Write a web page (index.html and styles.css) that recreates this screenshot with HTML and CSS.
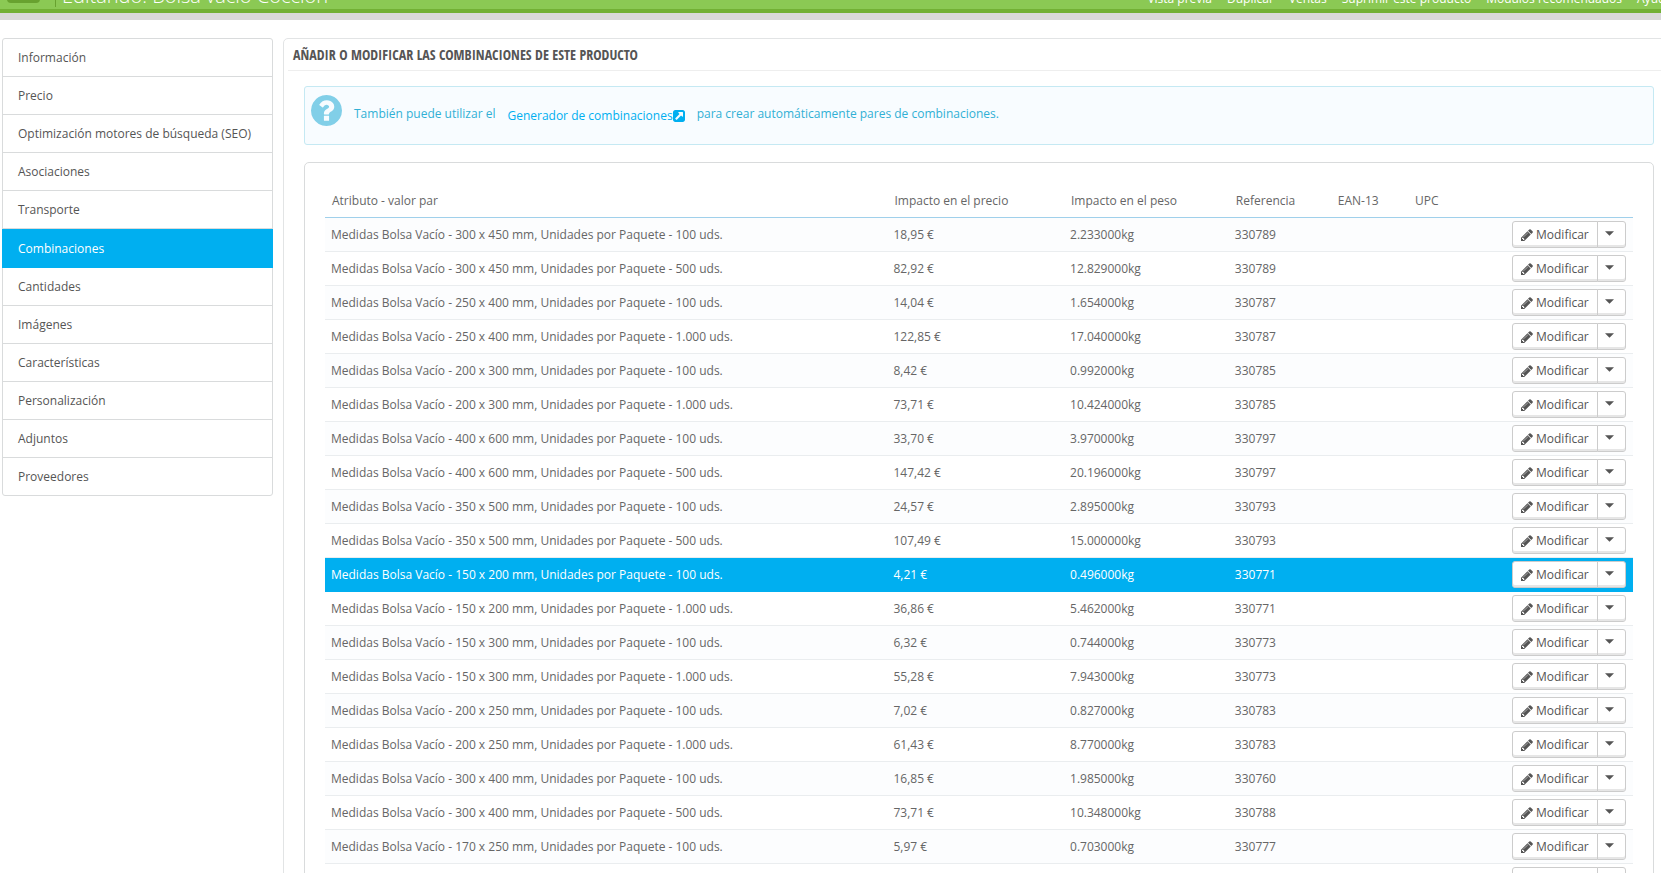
FILE: index.html
```
<!DOCTYPE html>
<html lang="es">
<head>
<meta charset="utf-8">
<title>Editando: Bolsa vacío Cocción</title>
<link rel="stylesheet" href="styles.css">
</head>
<body>
<svg class="sprite" aria-hidden="true">
  <symbol id="pencil" viewBox="0 128 1536 1536"><path d="M363 1536l91-91-235-235-91 91v107h128v128h107zm523-928q0-22-22-22-10 0-17 7l-542 542q-7 7-7 17 0 22 22 22 10 0 17-7l542-542q7-7 7-17zm-54-192l416 416-832 832h-416v-416zm683 96q0 53-37 90l-166 166-416-416 166-165q36-38 90-38 53 0 91 38l235 234q37 39 37 91z"/></symbol>
  <symbol id="caret" viewBox="0 0 8 4"><path d="M0 0h8L4 4z"/></symbol>
</svg>
<header class="toolbar">
  <span class="toolbar-icon"></span>
  <h1 class="toolbar-title">Editando: Bolsa vacío Cocción</h1>
  <nav class="toolbar-menu">
    <a href="#">Vista previa</a>
    <a href="#">Duplicar</a>
    <a href="#">Ventas</a>
    <a href="#">Suprimir este producto</a>
    <a href="#">Módulos recomendados</a>
    <a href="#">Ayuda</a>
  </nav>
</header>
<div class="layout">
  <nav class="sidebar">
    <a href="#">Información</a>
    <a href="#">Precio</a>
    <a href="#">Optimización motores de búsqueda (SEO)</a>
    <a href="#">Asociaciones</a>
    <a href="#">Transporte</a>
    <a href="#" class="active">Combinaciones</a>
    <a href="#">Cantidades</a>
    <a href="#">Imágenes</a>
    <a href="#">Características</a>
    <a href="#">Personalización</a>
    <a href="#">Adjuntos</a>
    <a href="#">Proveedores</a>
  </nav>
  <main class="panel">
    <h2 class="panel-heading">Añadir o modificar las combinaciones de este producto</h2>
    <div class="alert">
      <svg class="alert-icon" viewBox="0 128 1536 1536" aria-hidden="true"><path d="M896 1376v-192q0-14-9-23t-23-9h-192q-14 0-23 9t-9 23v192q0 14 9 23t23 9h192q14 0 23-9t9-23zm256-672q0-88-55.5-163t-138.5-116-170-41q-243 0-371 213-15 24 8 42l132 100q7 6 19 6 16 0 25-12 53-68 86-92 34-24 86-24 48 0 85.5 26t37.5 59q0 38-20 61t-68 45q-63 28-115.5 86.5t-52.5 125.5v36q0 14 9 23t23 9h192q14 0 23-9t9-23q0-19 21.5-49.5t54.5-49.5q32-18 49-28.5t46-35 44.5-48 28-60.5 12.5-81zm384 192q0 209-103 385.5t-279.5 279.5-385.5 103-385.5-103-279.5-279.5-103-385.5 103-385.5 279.5-279.5 385.5-103 385.5 103 279.5 279.5 103 385.5z"/></svg>
      <span>También puede utilizar el</span>
      <a class="alert-link" href="#">Generador de combinaciones<svg viewBox="0 128 1536 1536" aria-hidden="true"><path d="M1280 928v-480q0-26-19-45t-45-19h-480q-42 0-59 39-17 41 14 70l144 144-534 534q-19 19-19 45t19 45l102 102q19 19 45 19t45-19l534-534 144 144q18 19 45 19 12 0 25-5 39-17 39-59zm256-512v960q0 119-84.5 203.5t-203.5 84.5h-960q-119 0-203.5-84.5t-84.5-203.5v-960q0-119 84.5-203.5t203.5-84.5h960q119 0 203.5 84.5t84.5 203.5z"/></svg></a>
      <span>para crear automáticamente pares de combinaciones.</span>
    </div>
    <section class="card">
      <table class="grid">
        <colgroup><col class="c-name"><col class="c-price"><col class="c-weight"><col class="c-ref"><col class="c-ean"><col class="c-upc"><col></colgroup>
        <thead>
          <tr><th>Atributo - valor par</th><th>Impacto en el precio</th><th>Impacto en el peso</th><th>Referencia</th><th>EAN-13</th><th>UPC</th><th></th></tr>
        </thead>
        <tbody>
          <tr><td>Medidas Bolsa Vacío - 300 x 450 mm, Unidades por Paquete - 100 uds.</td><td>18,95 €</td><td>2.233000kg</td><td>330789</td><td></td><td></td><td><div class="actions"><button class="edit"><svg><use href="#pencil"/></svg>Modificar</button><button class="more" aria-label="Más"><svg><use href="#caret"/></svg></button></div></td></tr>
          <tr><td>Medidas Bolsa Vacío - 300 x 450 mm, Unidades por Paquete - 500 uds.</td><td>82,92 €</td><td>12.829000kg</td><td>330789</td><td></td><td></td><td><div class="actions"><button class="edit"><svg><use href="#pencil"/></svg>Modificar</button><button class="more" aria-label="Más"><svg><use href="#caret"/></svg></button></div></td></tr>
          <tr><td>Medidas Bolsa Vacío - 250 x 400 mm, Unidades por Paquete - 100 uds.</td><td>14,04 €</td><td>1.654000kg</td><td>330787</td><td></td><td></td><td><div class="actions"><button class="edit"><svg><use href="#pencil"/></svg>Modificar</button><button class="more" aria-label="Más"><svg><use href="#caret"/></svg></button></div></td></tr>
          <tr><td>Medidas Bolsa Vacío - 250 x 400 mm, Unidades por Paquete - 1.000 uds.</td><td>122,85 €</td><td>17.040000kg</td><td>330787</td><td></td><td></td><td><div class="actions"><button class="edit"><svg><use href="#pencil"/></svg>Modificar</button><button class="more" aria-label="Más"><svg><use href="#caret"/></svg></button></div></td></tr>
          <tr><td>Medidas Bolsa Vacío - 200 x 300 mm, Unidades por Paquete - 100 uds.</td><td>8,42 €</td><td>0.992000kg</td><td>330785</td><td></td><td></td><td><div class="actions"><button class="edit"><svg><use href="#pencil"/></svg>Modificar</button><button class="more" aria-label="Más"><svg><use href="#caret"/></svg></button></div></td></tr>
          <tr><td>Medidas Bolsa Vacío - 200 x 300 mm, Unidades por Paquete - 1.000 uds.</td><td>73,71 €</td><td>10.424000kg</td><td>330785</td><td></td><td></td><td><div class="actions"><button class="edit"><svg><use href="#pencil"/></svg>Modificar</button><button class="more" aria-label="Más"><svg><use href="#caret"/></svg></button></div></td></tr>
          <tr><td>Medidas Bolsa Vacío - 400 x 600 mm, Unidades por Paquete - 100 uds.</td><td>33,70 €</td><td>3.970000kg</td><td>330797</td><td></td><td></td><td><div class="actions"><button class="edit"><svg><use href="#pencil"/></svg>Modificar</button><button class="more" aria-label="Más"><svg><use href="#caret"/></svg></button></div></td></tr>
          <tr><td>Medidas Bolsa Vacío - 400 x 600 mm, Unidades por Paquete - 500 uds.</td><td>147,42 €</td><td>20.196000kg</td><td>330797</td><td></td><td></td><td><div class="actions"><button class="edit"><svg><use href="#pencil"/></svg>Modificar</button><button class="more" aria-label="Más"><svg><use href="#caret"/></svg></button></div></td></tr>
          <tr><td>Medidas Bolsa Vacío - 350 x 500 mm, Unidades por Paquete - 100 uds.</td><td>24,57 €</td><td>2.895000kg</td><td>330793</td><td></td><td></td><td><div class="actions"><button class="edit"><svg><use href="#pencil"/></svg>Modificar</button><button class="more" aria-label="Más"><svg><use href="#caret"/></svg></button></div></td></tr>
          <tr><td>Medidas Bolsa Vacío - 350 x 500 mm, Unidades por Paquete - 500 uds.</td><td>107,49 €</td><td>15.000000kg</td><td>330793</td><td></td><td></td><td><div class="actions"><button class="edit"><svg><use href="#pencil"/></svg>Modificar</button><button class="more" aria-label="Más"><svg><use href="#caret"/></svg></button></div></td></tr>
          <tr class="selected"><td>Medidas Bolsa Vacío - 150 x 200 mm, Unidades por Paquete - 100 uds.</td><td>4,21 €</td><td>0.496000kg</td><td>330771</td><td></td><td></td><td><div class="actions"><button class="edit"><svg><use href="#pencil"/></svg>Modificar</button><button class="more" aria-label="Más"><svg><use href="#caret"/></svg></button></div></td></tr>
          <tr><td>Medidas Bolsa Vacío - 150 x 200 mm, Unidades por Paquete - 1.000 uds.</td><td>36,86 €</td><td>5.462000kg</td><td>330771</td><td></td><td></td><td><div class="actions"><button class="edit"><svg><use href="#pencil"/></svg>Modificar</button><button class="more" aria-label="Más"><svg><use href="#caret"/></svg></button></div></td></tr>
          <tr><td>Medidas Bolsa Vacío - 150 x 300 mm, Unidades por Paquete - 100 uds.</td><td>6,32 €</td><td>0.744000kg</td><td>330773</td><td></td><td></td><td><div class="actions"><button class="edit"><svg><use href="#pencil"/></svg>Modificar</button><button class="more" aria-label="Más"><svg><use href="#caret"/></svg></button></div></td></tr>
          <tr><td>Medidas Bolsa Vacío - 150 x 300 mm, Unidades por Paquete - 1.000 uds.</td><td>55,28 €</td><td>7.943000kg</td><td>330773</td><td></td><td></td><td><div class="actions"><button class="edit"><svg><use href="#pencil"/></svg>Modificar</button><button class="more" aria-label="Más"><svg><use href="#caret"/></svg></button></div></td></tr>
          <tr><td>Medidas Bolsa Vacío - 200 x 250 mm, Unidades por Paquete - 100 uds.</td><td>7,02 €</td><td>0.827000kg</td><td>330783</td><td></td><td></td><td><div class="actions"><button class="edit"><svg><use href="#pencil"/></svg>Modificar</button><button class="more" aria-label="Más"><svg><use href="#caret"/></svg></button></div></td></tr>
          <tr><td>Medidas Bolsa Vacío - 200 x 250 mm, Unidades por Paquete - 1.000 uds.</td><td>61,43 €</td><td>8.770000kg</td><td>330783</td><td></td><td></td><td><div class="actions"><button class="edit"><svg><use href="#pencil"/></svg>Modificar</button><button class="more" aria-label="Más"><svg><use href="#caret"/></svg></button></div></td></tr>
          <tr><td>Medidas Bolsa Vacío - 300 x 400 mm, Unidades por Paquete - 100 uds.</td><td>16,85 €</td><td>1.985000kg</td><td>330760</td><td></td><td></td><td><div class="actions"><button class="edit"><svg><use href="#pencil"/></svg>Modificar</button><button class="more" aria-label="Más"><svg><use href="#caret"/></svg></button></div></td></tr>
          <tr><td>Medidas Bolsa Vacío - 300 x 400 mm, Unidades por Paquete - 500 uds.</td><td>73,71 €</td><td>10.348000kg</td><td>330788</td><td></td><td></td><td><div class="actions"><button class="edit"><svg><use href="#pencil"/></svg>Modificar</button><button class="more" aria-label="Más"><svg><use href="#caret"/></svg></button></div></td></tr>
          <tr><td>Medidas Bolsa Vacío - 170 x 250 mm, Unidades por Paquete - 100 uds.</td><td>5,97 €</td><td>0.703000kg</td><td>330777</td><td></td><td></td><td><div class="actions"><button class="edit"><svg><use href="#pencil"/></svg>Modificar</button><button class="more" aria-label="Más"><svg><use href="#caret"/></svg></button></div></td></tr>
          <tr><td></td><td></td><td></td><td></td><td></td><td></td><td><div class="actions"><button class="edit"><svg><use href="#pencil"/></svg>Modificar</button><button class="more" aria-label="Más"><svg><use href="#caret"/></svg></button></div></td></tr>
        </tbody>
      </table>
    </section>
  </main>
</div>
</body>
</html>
```
FILE: styles.css
```
* { box-sizing: border-box; }

body {
  margin: 0;
  height: 100vh;
  overflow: hidden;
  background: #fff;
  color: #555;
  font: 12px/17px "Open Sans", "Noto Sans", sans-serif;
}

a { color: inherit; text-decoration: none; }
svg { fill: currentColor; }
.sprite { display: none; }

/* Title bar, scrolled mostly out of view */
.toolbar {
  display: flex;
  align-items: flex-end;
  height: 60px;
  margin-top: -40px;
  padding: 0 0 11px 7px;
  background: linear-gradient(to top, #d9d9d9 7px, #72b035 7px, #72b035 11px, #8bc954 11px);
  color: #fff;
}
.toolbar-icon {
  width: 33px;
  height: 33px;
  margin-bottom: 6px;
  border-radius: 4px;
  background: #68a22f;
}
.toolbar-title {
  margin: 0 auto 2px 15px;
  padding-left: 6px;
  border-left: 1px solid #68a22f;
  font-size: 20px;
  font-weight: 300;
  line-height: 22px;
  white-space: nowrap;
}
.toolbar-menu {
  display: flex;
  gap: 15px;
  margin: 0 -11px 2px 0;
  white-space: nowrap;
}

.layout {
  display: flex;
  align-items: flex-start;
  gap: 10px;
  padding: 18px 0 0 2px;
}

.sidebar {
  flex: none;
  width: 271px;
  border: 1px solid #d9dbdc;
  border-radius: 3px;
}
.sidebar a {
  display: block;
  padding: 10px 15px;
  border-bottom: 1px solid #d9dbdc;
}
.sidebar a:last-child { border-bottom: 0; }
.sidebar .active {
  margin: 0 -1px;
  padding: 11px 16px 10px;
  border-color: #00aff0;
  background: #00aff0;
  color: #fff;
}

.panel {
  flex: 1;
  margin-right: -14px;
  padding: 0 20px 20px;
  border: 1px solid #e2e4e5;
  border-radius: 5px;
}
.panel-heading {
  margin: 0 -16px 15px;
  padding: 0 5px;
  border-bottom: 1px solid #eee;
  font: 300 14px/31px "Open Sans Condensed", "Open Sans", sans-serif;
  text-transform: uppercase;
}

.alert {
  display: flex;
  gap: 12px;
  height: 59px;
  margin-bottom: 17px;
  padding: 8px 6px;
  border: 1px solid #c5e9f3;
  border-radius: 3px;
  background: #f8fcff;
  color: #31b0d5;
  line-height: 38px;
}
.alert-icon { width: 31px; height: 31px; color: #81cfe8; }
.alert-link {
  display: flex;
  align-items: center;
  height: 42px;
  color: #00aff0;
}
.alert-link svg { width: 12px; height: 12px; }

.card {
  padding: 20px;
  border: 1px solid #d9dbdc;
  border-radius: 5px;
}

.grid {
  width: 100%;
  table-layout: fixed;
  border-collapse: separate;
  border-spacing: 0;
  color: #666;
  white-space: nowrap;
}
.c-name { width: 43%; }
.c-price { width: 13.5%; }
.c-weight { width: 12.6%; }
.c-ref { width: 7.8%; }
.c-ean { width: 5.9%; }
.c-upc { width: 5.9%; }
.grid th {
  height: 35px;
  padding: 0 7px;
  border-bottom: 1px solid #a0d0eb;
  font-weight: 400;
  text-align: left;
}
.grid td {
  height: 34px;
  padding: 0 7px 0 6px;
  border-bottom: 1px solid #eaedef;
}
.grid tbody tr:nth-child(odd) { background: #fcfdfe; }
.grid tbody tr.selected { background: #00aff0; color: #fff; }
.grid .selected td { border-color: #00aff0; }

.actions { display: flex; justify-content: flex-end; }
.actions button {
  display: flex;
  flex: none;
  align-items: center;
  height: 27px;
  border: 1px solid #ccc;
  background: #fff;
  box-shadow: inset 0 -2px 0 #e6e6e6;
  color: #555;
  font: inherit;
}
.actions .edit {
  gap: 3px;
  width: 86px;
  padding: 0 0 0 8px;
  border-radius: 3px 0 0 3px;
}
.actions .more {
  justify-content: center;
  width: 29px;
  margin-left: -1px;
  padding: 0 4px 2px 0;
  border-radius: 0 3px 3px 0;
}
.edit svg { width: 12px; height: 12px; }
.more svg { width: 9px; height: 5px; }
```
